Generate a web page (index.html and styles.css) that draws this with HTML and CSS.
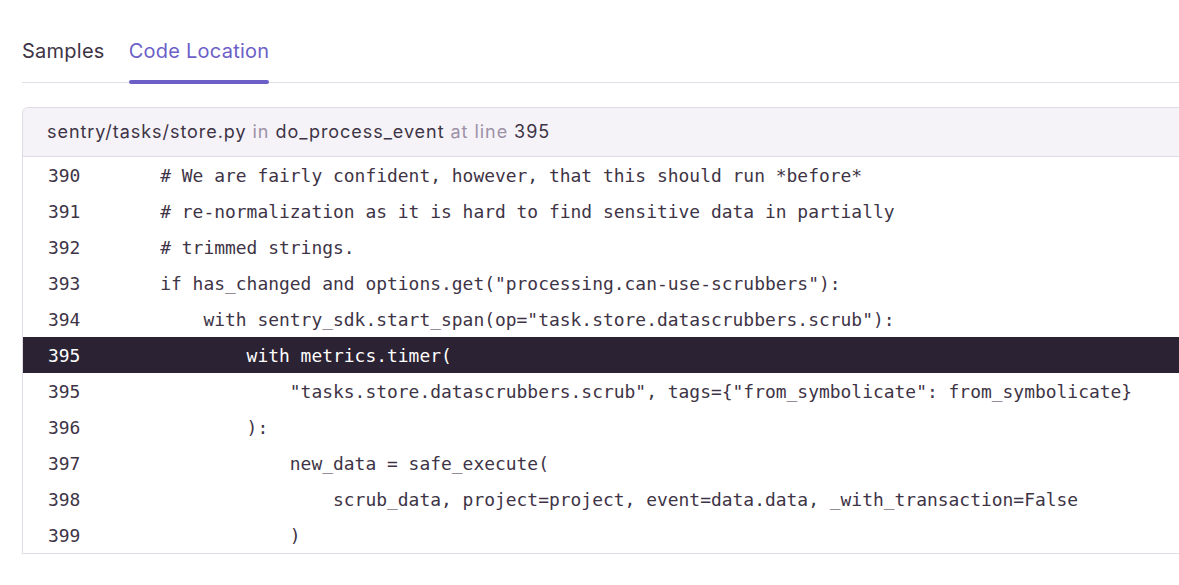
FILE: index.html
```html
<!DOCTYPE html>
<html>
<head>
<meta charset="utf-8">
<link rel="stylesheet" href="styles.css">
</head>
<body>
<div class="page">
  <nav class="tabs">
    <div class="tab">Samples</div>
    <div class="tab active">Code Location</div>
  </nav>
  <section class="frame">
    <header class="frame-head">
      <span class="strong">sentry/tasks/store.py</span> <span class="muted">in</span> <span class="strong">do_process_event</span> <span class="muted">at line</span> <span class="strong">395</span>
    </header>
    <div class="code">
      <div class="row"><span class="ln">390</span><span class="src">    # We are fairly confident, however, that this should run *before*</span></div>
      <div class="row"><span class="ln">391</span><span class="src">    # re-normalization as it is hard to find sensitive data in partially</span></div>
      <div class="row"><span class="ln">392</span><span class="src">    # trimmed strings.</span></div>
      <div class="row"><span class="ln">393</span><span class="src">    if has_changed and options.get("processing.can-use-scrubbers"):</span></div>
      <div class="row"><span class="ln">394</span><span class="src">        with sentry_sdk.start_span(op="task.store.datascrubbers.scrub"):</span></div>
      <div class="row current"><span class="ln">395</span><span class="src">            with metrics.timer(</span></div>
      <div class="row"><span class="ln">395</span><span class="src">                "tasks.store.datascrubbers.scrub", tags={"from_symbolicate": from_symbolicate}</span></div>
      <div class="row"><span class="ln">396</span><span class="src">            ):</span></div>
      <div class="row"><span class="ln">397</span><span class="src">                new_data = safe_execute(</span></div>
      <div class="row"><span class="ln">398</span><span class="src">                    scrub_data, project=project, event=data.data, _with_transaction=False</span></div>
      <div class="row"><span class="ln">399</span><span class="src">                )</span></div>
    </div>
  </section>
</div>
</body>
</html>
```

FILE: styles.css
```css
html, body {
  margin: 0;
  padding: 0;
  background: #ffffff;
  overflow: hidden;
}

.page {
  padding-left: 22px;
  font-family: "Inter", "Noto Sans", sans-serif;
  color: #2b2233;
}

.tabs {
  display: flex;
  gap: 24px;
  padding-top: 38px;
  border-bottom: 1px solid #e2dee6;
  width: 1200px;
}

.tab {
  position: relative;
  font-size: 20px;
  line-height: 26px;
  letter-spacing: 0.25px;
  padding-bottom: 18px;
  color: #3e3446;
}

.tab.active {
  color: #6c5fc7;
}

.tab.active::after {
  content: "";
  position: absolute;
  left: 0;
  right: 0;
  bottom: -2px;
  height: 4px;
  border-radius: 2px;
  background: #6c5fc7;
}

.frame {
  margin-top: 24px;
  width: 1200px;
  border: 1px solid #e0dce5;
  border-right: none;
  border-radius: 6px 0 0 0;
  overflow: hidden;
}

.frame-head {
  height: 48px;
  line-height: 48px;
  padding-left: 24px;
  background: #f5f3f7;
  border-bottom: 1px solid #e0dce5;
  font-size: 18px;
  letter-spacing: 0.95px;
  color: #3e3446;
}

.muted {
  color: #9d91a8;
}

.code {
  font-family: "DejaVu Sans Mono", "Liberation Mono", monospace;
  font-size: 17.95px;
  color: #3e3446;
}

.row {
  display: flex;
  height: 36px;
  line-height: 38px;
  white-space: pre;
}

.ln {
  flex: none;
  width: 69px;
  padding-left: 25px;
  box-sizing: content-box;
}

.src {
  flex: none;
}

.row.current {
  background: #2b2233;
  color: #ffffff;
}
```
